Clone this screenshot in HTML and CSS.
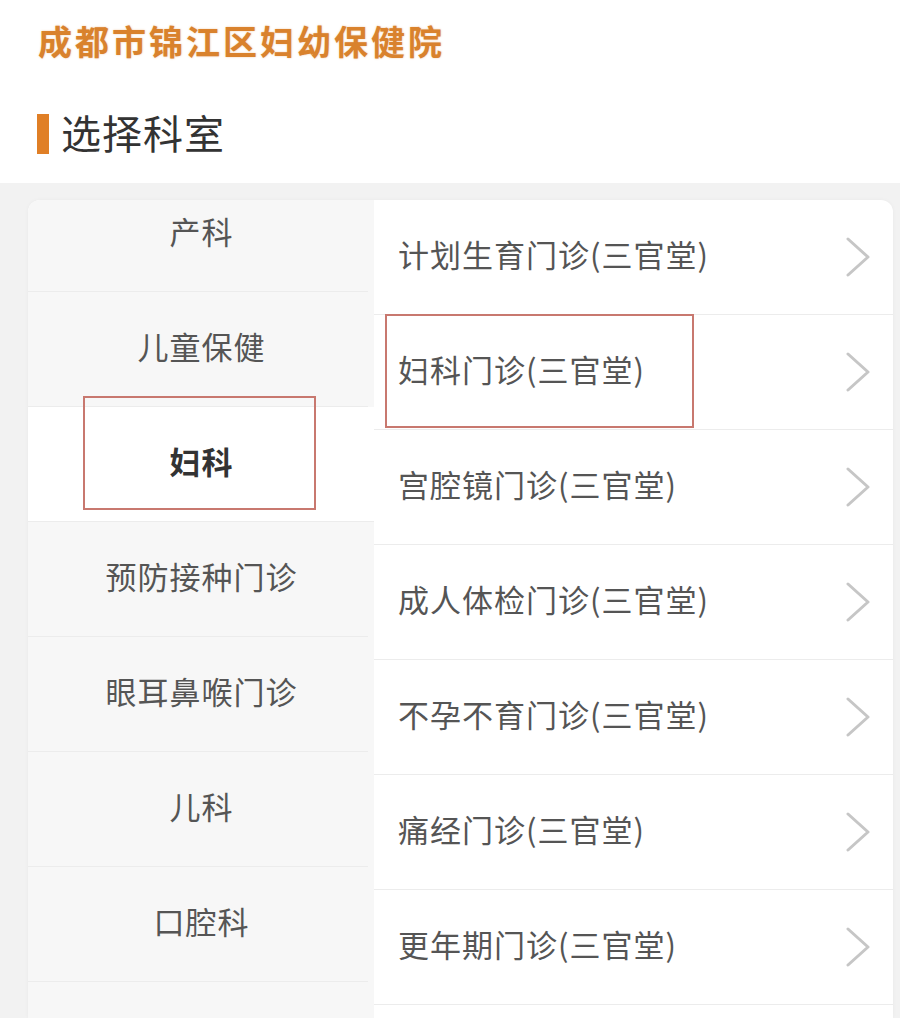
FILE: index.html
```html
<!DOCTYPE html>
<html lang="zh-CN">
<head>
<meta charset="utf-8">
<title>选择科室</title>
<link rel="stylesheet" href="styles.css">
</head>
<body>
<header class="header">
  <h1 class="hospital">成都市锦江区妇幼保健院</h1>
  <h2 class="section-title"><span class="bar"></span>选择科室</h2>
</header>
<main class="main">
  <div class="card">
    <nav class="depts">
      <ul class="dept-list">
        <li class="dept">产科</li>
        <li class="dept">儿童保健</li>
        <li class="dept active">妇科</li>
        <li class="dept">预防接种门诊</li>
        <li class="dept">眼耳鼻喉门诊</li>
        <li class="dept">儿科</li>
        <li class="dept">口腔科</li>
        <li class="dept"></li>
      </ul>
    </nav>
    <ul class="clinics">
      <li class="clinic"><span>计划生育门诊(三官堂)</span><svg class="chev" viewBox="0 0 26 40"><polyline points="3,2 23,20 3,38"/></svg></li>
      <li class="clinic"><span>妇科门诊(三官堂)</span><svg class="chev" viewBox="0 0 26 40"><polyline points="3,2 23,20 3,38"/></svg></li>
      <li class="clinic"><span>宫腔镜门诊(三官堂)</span><svg class="chev" viewBox="0 0 26 40"><polyline points="3,2 23,20 3,38"/></svg></li>
      <li class="clinic"><span>成人体检门诊(三官堂)</span><svg class="chev" viewBox="0 0 26 40"><polyline points="3,2 23,20 3,38"/></svg></li>
      <li class="clinic"><span>不孕不育门诊(三官堂)</span><svg class="chev" viewBox="0 0 26 40"><polyline points="3,2 23,20 3,38"/></svg></li>
      <li class="clinic"><span>痛经门诊(三官堂)</span><svg class="chev" viewBox="0 0 26 40"><polyline points="3,2 23,20 3,38"/></svg></li>
      <li class="clinic"><span>更年期门诊(三官堂)</span><svg class="chev" viewBox="0 0 26 40"><polyline points="3,2 23,20 3,38"/></svg></li>
      <li class="clinic"></li>
    </ul>
    <div class="mark mark-dept"></div>
    <div class="mark mark-clinic"></div>
  </div>
</main>
</body>
</html>
```
FILE: styles.css
```css
* { box-sizing: border-box; }
html, body {
  margin: 0;
  padding: 0;
  height: 1018px;
  overflow: hidden;
  background: #f2f2f2;
  font-family: "Noto Sans CJK SC", "Noto Sans", sans-serif;
}
.header {
  background: #fff;
  height: 183px;
  padding: 19px 0 0 38px;
}
.hospital {
  margin: 0;
  font-size: 34px;
  line-height: 44px;
  font-weight: 700;
  color: #d9822d;
  letter-spacing: 3px;
  text-shadow: 0 0 2px rgba(217, 130, 45, 0.45);
}
.section-title {
  margin: 43px 0 0 -1px;
  display: flex;
  align-items: center;
  font-size: 40px;
  line-height: 52px;
  font-weight: 400;
  color: #333;
  letter-spacing: 1px;
}
.bar {
  width: 12px;
  height: 40px;
  background: #e07f26;
  margin-right: 12px;
  margin-top: 4px;
}
.main {
  padding: 17px 7px 0 28px;
  height: 835px;
}
.card {
  position: relative;
  display: grid;
  grid-template-columns: 346px 1fr;
  height: 100%;
  border-radius: 12px 12px 0 0;
  overflow: hidden;
  background: #fff;
  box-shadow: 0 0 4px rgba(0, 0, 0, 0.04);
}
.depts {
  background: #f7f7f7;
  overflow: hidden;
}
.dept-list, .clinics {
  list-style: none;
  margin: 0;
  padding: 0;
}
.dept-list { margin-top: -23px; }
.dept {
  height: 115px;
  display: flex;
  align-items: center;
  justify-content: center;
  padding: 0 0 8px 7px;
  font-size: 31px;
  letter-spacing: 1px;
  color: #555;
  margin-right: 6px;
  border-bottom: 1px solid #ececec;
}
.dept.active {
  background: #fff;
  margin-right: 0;
  padding-left: 1px;
  font-weight: 700;
  color: #333;
}
.clinic {
  height: 115px;
  display: flex;
  align-items: center;
  justify-content: space-between;
  padding: 0 22px 0 24px;
  border-bottom: 1px solid #ececec;
  font-size: 31px;
  letter-spacing: 1px;
  color: #555;
}
.clinic span {
  padding-bottom: 8px;
}
.chev {
  width: 26px;
  height: 40px;
}
.chev polyline {
  fill: none;
  stroke: #c6c6c6;
  stroke-width: 3;
  stroke-linecap: round;
  stroke-linejoin: round;
}
.mark {
  position: absolute;
  border: 2px solid #c8786f;
}
.mark-dept {
  left: 55px;
  top: 196px;
  width: 233px;
  height: 114px;
}
.mark-clinic {
  left: 357px;
  top: 114px;
  width: 309px;
  height: 114px;
}
```
